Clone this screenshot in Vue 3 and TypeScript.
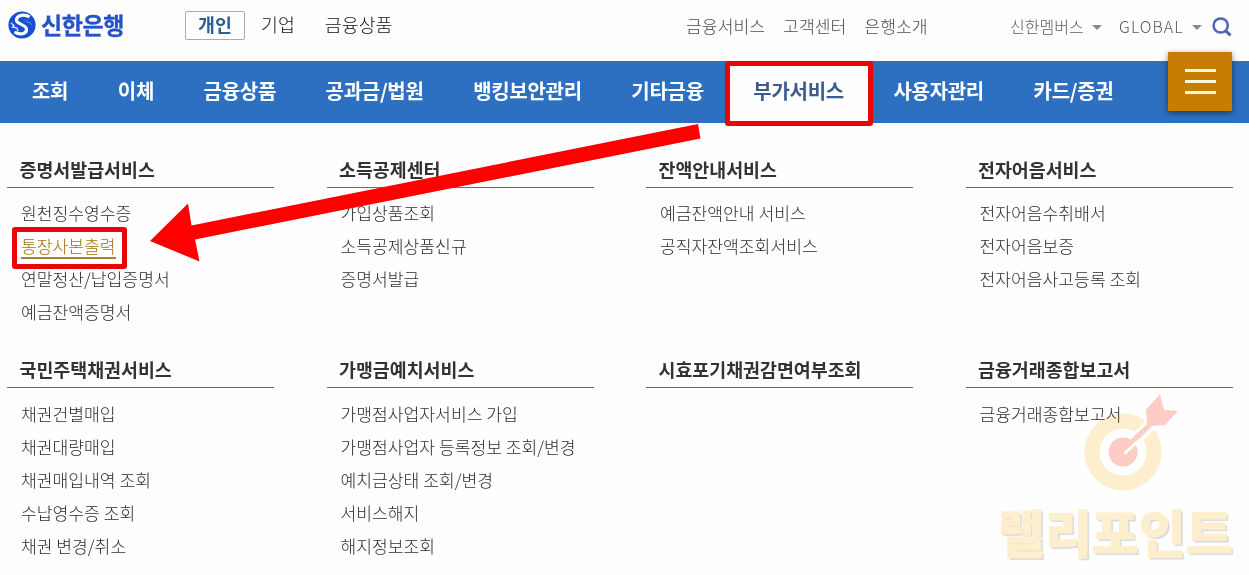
<script setup lang="ts">
interface MenuGroup {
  title: string
  links: string[]
}

const segments: string[] = ['개인', '기업', '금융상품']
const services: string[] = ['금융서비스', '고객센터', '은행소개']
const navItems: string[] = [
  '조회', '이체', '금융상품', '공과금/법원', '뱅킹보안관리',
  '기타금융', '부가서비스', '사용자관리', '카드/증권',
]
const activeNav = '부가서비스'
const activeLink = '통장사본출력'

const groups: MenuGroup[] = [
  { title: '증명서발급서비스', links: ['원천징수영수증', '통장사본출력', '연말정산/납입증명서', '예금잔액증명서'] },
  { title: '소득공제센터', links: ['가입상품조회', '소득공제상품신규', '증명서발급'] },
  { title: '잔액안내서비스', links: ['예금잔액안내 서비스', '공직자잔액조회서비스'] },
  { title: '전자어음서비스', links: ['전자어음수취배서', '전자어음보증', '전자어음사고등록 조회'] },
  { title: '국민주택채권서비스', links: ['채권건별매입', '채권대량매입', '채권매입내역 조회', '수납영수증 조회', '채권 변경/취소'] },
  { title: '가맹금예치서비스', links: ['가맹점사업자서비스 가입', '가맹점사업자 등록정보 조회/변경', '예치금상태 조회/변경', '서비스해지', '해지정보조회'] },
  { title: '시효포기채권감면여부조회', links: [] },
  { title: '금융거래종합보고서', links: ['금융거래종합보고서'] },
]
</script>

<template>
  <div class="page">
    <header class="top">
      <div class="logo">
        <svg class="logo-mark" viewBox="0 0 28 28">
          <circle cx="14" cy="14" r="13.6" fill="#1650d2" />
          <path d="M21.500 6C17 2.500 8.500 4 8.500 9C8.500 13.800 18.500 13 18.500 18.500C18.500 23 12 24.500 6.500 21" fill="none" stroke="#fff" stroke-width="3.200" />
          <path d="M3 12l3 2.500-1.500 1.500 4.500 1 1 3.500" fill="none" stroke="#d4e0fb" stroke-width="1.400" />
          <path d="M17 8.500l2 2.500 3 .5 2 3" fill="none" stroke="#5f88e6" stroke-width="1" />
        </svg>
        <span class="logo-text">신한은행</span>
      </div>
      <nav class="segments">
        <a v-for="(s, i) in segments" :key="s" :class="{ on: i === 0 }">{{ s }}</a>
      </nav>
      <nav class="services">
        <a v-for="s in services" :key="s">{{ s }}</a>
      </nav>
      <div class="tools">
        <span class="members">신한멤버스</span>
        <i class="caret"></i>
        <span class="global">GLOBAL</span>
        <i class="caret"></i>
        <svg class="search" viewBox="0 0 20 20">
          <circle cx="8.700" cy="8.500" r="7.100" fill="none" stroke="#4c66b4" stroke-width="2.500" />
          <path d="M13.700 13.800L18.500 18.300" stroke="#4c66b4" stroke-width="3" />
        </svg>
      </div>
    </header>

    <nav class="main-nav">
      <a v-for="n in navItems" :key="n" :class="{ active: n === activeNav }"><span>{{ n }}</span></a>
      <button class="menu-btn"><i></i><i></i><i></i></button>
    </nav>

    <main class="groups">
      <section v-for="g in groups" :key="g.title" class="group">
        <h2>{{ g.title }}</h2>
        <ul>
          <li v-for="l in g.links" :key="l">
            <a :class="{ picked: l === activeLink }">{{ l }}</a>
          </li>
        </ul>
      </section>
    </main>

    <svg class="arrow" viewBox="0 0 560 150">
      <path d="M550 4L552.500 18.500L47 119.500L51.500 141.500L2 121L40 83.500L43.500 105.500Z" fill="#fe0000" />
    </svg>

    <div class="watermark">
      <svg viewBox="0 0 100 104">
        <circle cx="43" cy="62" r="31" fill="none" stroke="#fef0cf" stroke-width="15" />
        <path d="M44 61L78 27" stroke="#fff" stroke-width="12" />
        <circle cx="43" cy="62" r="14.500" fill="#fdcdc6" />
        <path d="M49 51L67 34L66 20L80 4L84 20L98 21L85 35L72 36L53 55Z" fill="#fdcdc6" />
        <path d="M44.500 63.500L57 52" stroke="#fff" stroke-width="3" />
      </svg>
      <span>랠리포인트</span>
    </div>
  </div>
</template>

<style>
body {
  background: #fefefe;
}
</style>

<style scoped>
.page {
  position: relative;
  width: 1249px;
  height: 575px;
  overflow: hidden;
  background: #fefefe;
  font-family: 'Noto Sans CJK KR', sans-serif;
  color: #2c2c2c;
}
.top {
  display: flex;
  height: 61px;
  box-sizing: border-box;
  padding-left: 8px;
  align-items: flex-start;
  white-space: nowrap;
}
.logo {
  display: flex;
  width: 177px;
  padding-top: 11px;
  gap: 5px;
}
.logo-mark {
  width: 28px;
  height: 28px;
}
.logo-text {
  font-size: 23px;
  line-height: 26px;
  font-weight: 700;
  letter-spacing: -0.4px;
  color: #2452c8;
  -webkit-text-stroke: 0.3px #2452c8;
}
.segments {
  display: flex;
  padding-top: 11px;
  width: 501px;
  font-size: 18.400px;
  line-height: 27px;
  font-weight: 300;
  color: #111;
}
.segments a + a {
  margin-left: 16px;
}
.segments a + a + a {
  margin-left: 30px;
}
.segments .on {
  width: 60px;
  height: 29px;
  box-sizing: border-box;
  border: 1px solid #aaa;
  border-radius: 2px;
  text-align: center;
  line-height: 25px;
  font-weight: 700;
  color: #2f5f8f;
}
.services {
  display: flex;
  gap: 18px;
  width: 324px;
  padding-top: 12px;
  font-size: 17.200px;
  line-height: 28px;
  font-weight: 300;
  color: #4c4c4c;
}
.tools {
  display: flex;
  align-items: center;
  padding-top: 13px;
  height: 28px;
  font-size: 16px;
  line-height: 28px;
  font-weight: 300;
  color: #5c5c5c;
}
.caret {
  border: 5px solid transparent;
  border-top-color: #888;
  border-bottom: 0;
  margin-left: 8px;
}
.global {
  margin-left: 17.500px;
  letter-spacing: 1px;
}
.global,
.members {
  position: relative;
  top: -1px;
}
.search {
  width: 20px;
  height: 20px;
  margin-left: 10px;
}
.main-nav {
  display: flex;
  position: relative;
  height: 62px;
  padding-left: 32px;
  gap: 49.600px;
  background: #2d70c2;
  color: #fff;
  font-size: 20px;
  line-height: 59px;
  font-weight: 700;
  letter-spacing: -0.300px;
  white-space: nowrap;
}
.main-nav a {
  position: relative;
}
.main-nav a span {
  position: relative;
}
.main-nav .active {
  color: #3c5c8c;
}
.main-nav .active::before {
  content: '';
  position: absolute;
  left: -28.500px;
  right: -29.500px;
  top: 0;
  height: 55px;
  background: #fefefe;
  border: 5px solid #ea0608;
  border-radius: 3px;
}
.menu-btn {
  position: absolute;
  left: 1168px;
  top: -9px;
  width: 64px;
  height: 59px;
  padding: 0;
  border: 0;
  background: #c77c02;
  box-shadow: 0 2px 6px rgba(0, 0, 0, 0.5);
  display: flex;
  flex-direction: column;
  align-items: center;
  justify-content: center;
  gap: 7.500px;
}
.menu-btn i {
  width: 31px;
  height: 3.500px;
  background: #fff6dc;
}
.groups {
  display: grid;
  grid-template-columns: repeat(4, 267px);
  grid-auto-rows: 200px;
  column-gap: 52.500px;
  padding: 30px 0 0 7px;
}
.group h2 {
  margin: 0;
  height: 34px;
  padding-left: 12.500px;
  border-bottom: 1px solid #4d7795;
  font-size: 18.400px;
  line-height: 33px;
  font-weight: 700;
  color: #333;
}
.group ul {
  list-style: none;
  margin: 0;
  padding: 8px 0 0 14px;
  font-size: 17.150px;
  line-height: 33px;
  font-weight: 300;
  white-space: nowrap;
}
.group:nth-child(n + 5) ul {
  padding-top: 9px;
}
.group li {
  height: 33px;
}
.picked {
  position: relative;
  display: inline-block;
  color: #a07408;
}
.picked::before {
  content: '';
  position: absolute;
  left: 0;
  right: 0;
  top: 28px;
  height: 2px;
  background: #a9822b;
}
.picked::after {
  content: '';
  position: absolute;
  left: -9px;
  top: -2px;
  width: 105px;
  height: 32px;
  border: 5px solid #ea0608;
  border-radius: 3px;
}
.arrow {
  position: absolute;
  left: 148px;
  top: 120px;
  width: 560px;
  height: 150px;
}
.watermark {
  position: absolute;
  left: 998px;
  top: 390px;
  width: 240px;
  mix-blend-mode: multiply;
}
.watermark svg {
  display: block;
  width: 100px;
  height: 104px;
  margin-left: 82px;
}
.watermark span {
  display: block;
  font-size: 51px;
  line-height: 74px;
  font-weight: 900;
  white-space: nowrap;
  color: #fef0cf;
  -webkit-text-stroke: 0.8px #fef0cf;
  text-shadow: 2px 2px 1px #dcdadb;
}
</style>
